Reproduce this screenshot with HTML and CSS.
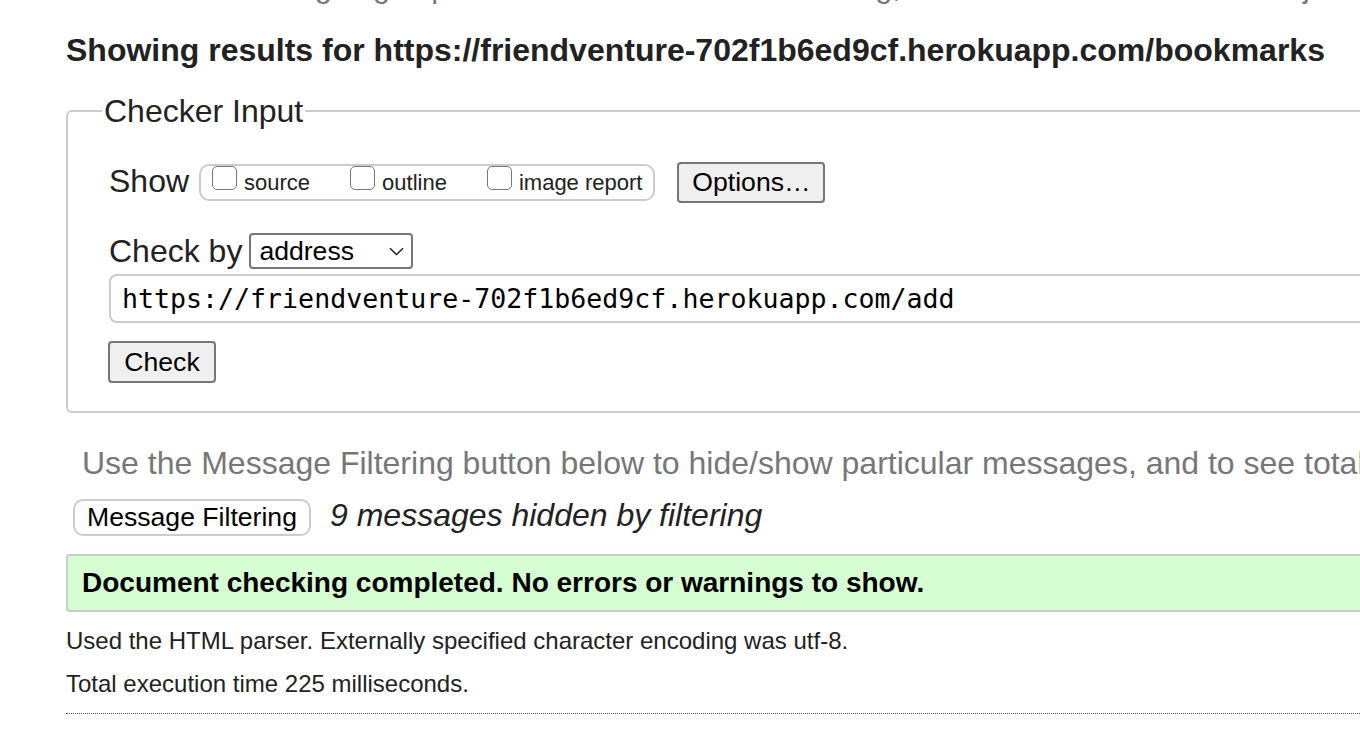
FILE: index.html
```html
<!DOCTYPE html>
<html lang="en">
<head>
<meta charset="utf-8">
<title>Nu Html Checker</title>
<link rel="stylesheet" href="styles.css">
</head>
<body>
<div class="page">
  <p class="intro">This tool is an ongoing experiment in better HTML checking, and its behavior remains subject to change</p>
  <h2 class="results">Showing results for https://friendventure-702f1b6ed9cf.herokuapp.com/bookmarks</h2>
  <fieldset class="checker">
    <legend class="checker-legend">Checker Input</legend>
    <div class="show-row">
      <span class="row-label">Show</span>
      <div class="show-group">
        <label class="opt"><input type="checkbox" class="cb"><span>source</span></label>
        <label class="opt"><input type="checkbox" class="cb"><span>outline</span></label>
        <label class="opt"><input type="checkbox" class="cb"><span>image report</span></label>
      </div>
      <button class="btn btn-options" type="button">Options…</button>
    </div>
    <div class="by-row">
      <span class="row-label">Check by</span>
      <div class="select">
        <span>address</span>
        <svg class="chev" width="15" height="9" viewBox="0 0 15 9"><path d="M1 1.2 L7.5 7.5 L14 1.2" fill="none" stroke="#222" stroke-width="1.5"/></svg>
      </div>
    </div>
    <div class="url-input">https://friendventure-702f1b6ed9cf.herokuapp.com/add</div>
    <div class="check-row"><button class="btn btn-check" type="button">Check</button></div>
  </fieldset>
  <p class="filter-hint">Use the Message Filtering button below to hide/show particular messages, and to see total counts of errors and warnings.</p>
  <div class="filter-row">
    <button class="btn-filter" type="button">Message Filtering</button>
    <em class="hidden-count">9 messages hidden by filtering</em>
  </div>
  <div class="success">Document checking completed. No errors or warnings to show.</div>
  <p class="stats">Used the HTML parser. Externally specified character encoding was utf-8.</p>
  <p class="stats">Total execution time 225 milliseconds.</p>
  <hr class="dots">
</div>
</body>
</html>
```
FILE: styles.css
```css
html, body {
  margin: 0;
  padding: 0;
  background: #fff;
  overflow: hidden;
}
body {
  font-family: "Liberation Sans", Arial, sans-serif;
  color: #222;
  width: 1360px;
  height: 732px;
}
.page {
  width: 1700px;
  padding-left: 66px;
}
.intro {
  margin: -31px 0 0 16px;
  font-size: 30.8px;
  line-height: 36px;
  color: #777;
  white-space: nowrap;
}
.results {
  margin: 27px 0 0 0;
  font-size: 32px;
  font-weight: bold;
  line-height: 36px;
  white-space: nowrap;
  color: #222;
}
.checker {
  margin: 25px 0 0 0;
  border: 2px solid #ccc;
  border-radius: 6px;
  padding: 0 0 28px 41px;
}
.checker-legend {
  margin-left: -7px;
  padding: 0 2px;
  font-size: 32px;
  line-height: 36px;
  color: #222;
}
.show-row {
  display: flex;
  align-items: center;
  margin-top: 33px;
}
.row-label {
  font-size: 32px;
  line-height: 36px;
  margin-bottom: 4px;
}
.show-group {
  margin-left: 10px;
  display: flex;
  align-items: flex-start;
  height: 37px;
  box-sizing: border-box;
  border: 2px solid #ccc;
  border-radius: 10px;
  padding: 0 11px 0 11px;
}
.opt {
  display: flex;
  align-items: flex-start;
  font-size: 22px;
  line-height: 26px;
  color: #222;
  margin-right: 40px;
}
.opt:last-child { margin-right: 0; }
.opt span { margin-top: 4px; }
.cb {
  appearance: none;
  -webkit-appearance: none;
  margin: 0 7px 0 0;
  width: 25px;
  height: 24px;
  box-sizing: border-box;
  border: 1.5px solid #777;
  border-radius: 5px;
  background: #fff;
}
.btn {
  font-family: "Liberation Sans", Arial, sans-serif;
  font-size: 26.6px;
  color: #000;
  background: #efefef;
  border: 2px solid #767676;
  border-radius: 4px;
  box-sizing: border-box;
  padding: 0;
}
.btn-options {
  margin-left: 22px;
  width: 148px;
  height: 41px;
}
.by-row {
  display: flex;
  align-items: center;
  margin-top: 30px;
}
.by-row .row-label { margin-bottom: 0; }
.select {
  margin-left: 7px;
  width: 164px;
  height: 36px;
  box-sizing: border-box;
  border: 2px solid #767676;
  border-radius: 4px;
  display: flex;
  align-items: center;
  justify-content: space-between;
  padding: 0 7px 0 8px;
  font-size: 26.6px;
  color: #000;
}
.url-input {
  margin-top: 5px;
  height: 49px;
  box-sizing: border-box;
  border: 2px solid #ccc;
  border-right: none;
  border-radius: 8px 0 0 8px;
  padding-left: 11px;
  display: flex;
  align-items: center;
  font-family: "DejaVu Sans Mono", monospace;
  font-size: 26.6px;
  color: #000;
}
.check-row {
  margin-top: 18px;
  display: flex;
}
.btn-check {
  margin-left: -1px;
  width: 108px;
  height: 42px;
}
.filter-hint {
  margin: 32px 0 0 16px;
  font-size: 32px;
  line-height: 36px;
  color: #777;
  white-space: nowrap;
}
.filter-row {
  margin-top: 16px;
  display: flex;
  align-items: center;
}
.btn-filter {
  margin-left: 7px;
  width: 238px;
  height: 37px;
  box-sizing: border-box;
  background: #fff;
  border: 2px solid #ccc;
  border-radius: 10px;
  font-family: "Liberation Sans", Arial, sans-serif;
  font-size: 26.6px;
  color: #000;
  padding: 0;
}
.hidden-count {
  margin-left: 19px;
  margin-bottom: 4px;
  font-size: 32px;
  line-height: 36px;
  color: #222;
}
.success {
  margin-top: 17px;
  height: 58px;
  box-sizing: border-box;
  background: #d7fdd2;
  border: 2px solid #ccc;
  border-right: none;
  border-radius: 4px 0 0 4px;
  display: flex;
  align-items: center;
  padding-left: 14px;
  font-size: 28px;
  font-weight: bold;
  color: #000;
}
.stats {
  margin: 15px 0 0 0;
  font-size: 24px;
  line-height: 28px;
  color: #222;
}
.dots {
  margin: 15px 0 0 0;
  border: none;
  border-top: 1px dotted #555;
  height: 0;
}
```
